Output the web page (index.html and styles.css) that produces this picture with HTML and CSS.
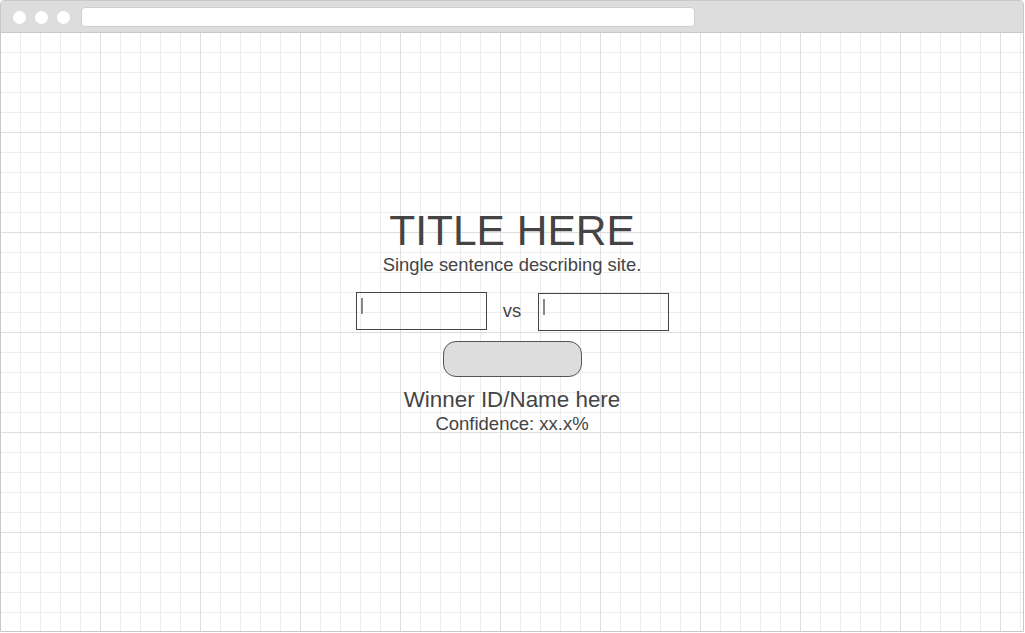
FILE: index.html
```html
<!DOCTYPE html>
<html lang="en">
<head>
<meta charset="utf-8">
<title>Mockup</title>
<link rel="stylesheet" href="styles.css">
</head>
<body>
<div class="window">
  <div class="titlebar">
    <span class="dot"></span>
    <span class="dot"></span>
    <span class="dot"></span>
    <div class="address"></div>
  </div>
  <div class="canvas">
    <h1 class="title">TITLE HERE</h1>
    <p class="subtitle">Single sentence describing site.</p>
    <div class="versus">
      <div class="field"><span class="caret"></span></div>
      <span class="vs">vs</span>
      <div class="field field-low"><span class="caret"></span></div>
    </div>
    <button class="go" type="button"></button>
    <p class="winner">Winner ID/Name here</p>
    <p class="confidence">Confidence: xx.x%</p>
  </div>
</div>
</body>
</html>
```

FILE: styles.css
```css
html, body {
  margin: 0;
  padding: 0;
  background: #ffffff;
}

body {
  font-family: "Liberation Sans", Arial, sans-serif;
  color: #444444;
}

.window {
  width: 1024px;
  height: 632px;
  box-sizing: border-box;
  border: 1px solid #c8c8c8;
  border-radius: 4px 4px 0 0;
  display: flex;
  flex-direction: column;
  overflow: hidden;
}

.titlebar {
  flex: 0 0 auto;
  background: #dddddd;
  border-bottom: 1px solid #c8c8c8;
  display: flex;
  align-items: center;
  padding: 1px 0 0 12px;
  box-sizing: content-box;
  height: 30px;
}

.dot {
  width: 13px;
  height: 13px;
  border-radius: 50%;
  background: #ffffff;
  margin-right: 9px;
  flex: 0 0 auto;
}

.dot:nth-child(3) {
  margin-right: 11px;
}

.address {
  width: 612px;
  height: 18px;
  background: #ffffff;
  border: 1px solid #cfcfcf;
  border-radius: 4px;
}

.canvas {
  flex: 1 1 auto;
  display: flex;
  flex-direction: column;
  align-items: center;
  padding-top: 174px;
  background-color: #ffffff;
  background-image:
    linear-gradient(to right, #dedede 1px, transparent 1px),
    linear-gradient(to bottom, #dedede 1px, transparent 1px),
    linear-gradient(to right, #ededed 1px, transparent 1px),
    linear-gradient(to bottom, #ededed 1px, transparent 1px);
  background-size: 100px 100px, 100px 100px, 20px 20px, 20px 20px;
  background-position: -1px -1px, -1px -1px, -1px -1px, -1px -1px;
}

.title {
  margin: 0;
  font-size: 42.5px;
  font-weight: normal;
  line-height: 48px;
  color: #444444;
}

.subtitle {
  margin: 0;
  font-size: 18.4px;
  line-height: 19px;
}

.versus {
  margin-top: 18px;
  display: flex;
  align-items: flex-start;
}

.field {
  width: 129px;
  height: 36px;
  border: 1px solid #444444;
  background: transparent;
  display: flex;
  align-items: flex-start;
  padding: 0;
}

.field-low {
  margin-top: 1px;
}

.caret {
  width: 2px;
  height: 16px;
  background: #888888;
  margin: 5px 0 0 4px;
}

.vs {
  width: 51px;
  text-align: center;
  font-size: 18.4px;
  line-height: 37px;
}

.go {
  margin-top: 10px;
  width: 139px;
  height: 36px;
  border: 1px solid #555555;
  border-radius: 13px;
  background: #dddddd;
  padding: 0;
}

.winner {
  margin: 10px 0 0;
  font-size: 22.4px;
  line-height: 25px;
}

.confidence {
  margin: 2px 0 0;
  font-size: 18.5px;
  line-height: 20px;
}
```
